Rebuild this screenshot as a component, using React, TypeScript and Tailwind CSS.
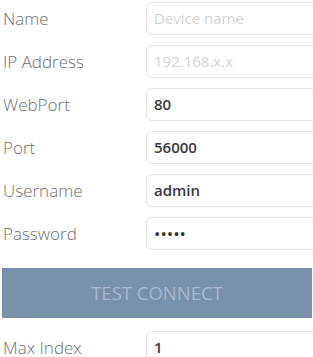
import React from 'react';

const rows = [
  { label: 'Name', value: '', placeholder: 'Device name' },
  { label: 'IP Address', value: '', placeholder: '192.168.x.x' },
  { label: 'WebPort', value: '80' },
  { label: 'Port', value: '56000' },
  { label: 'Username', value: 'admin' },
  { label: 'Password', value: '•••••', password: true },
];

function Field({ label, value, placeholder, password }: { label: string; value: string; placeholder?: string; password?: boolean }) {
  return (
    <div className="flex items-center h-[33px]">
      <span className="w-[146px] shrink-0 pl-[3px] text-[17px] font-light text-[#6e6e6e]">{label}</span>
      <div className="w-[200px] h-[33px] shrink-0 border border-[#e2e2e2] rounded-[6px] flex items-center pl-[7px]">
        {value ? (
          <span className={password ? 'text-[17px] text-[#333]' : 'text-[15px] font-semibold text-[#3a3a3a]'}>{value}</span>
        ) : (
          <span className="text-[15px] text-[#d2d2d2]">{placeholder}</span>
        )}
      </div>
    </div>
  );
}

export default function App() {
  return (
    <div className="w-[313px] h-[357px] bg-white overflow-hidden font-['Open_Sans',sans-serif] pt-[2px]">
      <div className="flex flex-col gap-[10px]">
        {rows.map((r) => (
          <Field key={r.label} {...r} />
        ))}
      </div>

      {/* Test button */}
      <div className="mt-[18px] ml-[2px] w-[310px] h-[50px] bg-[#7990ab] flex items-center justify-center">
        <span className="text-[18.5px] text-[#a7b7ca]">TEST CONNECT</span>
      </div>

      <div className="mt-[13px]">
        <Field label="Max Index" value="1" />
      </div>
    </div>
  );
}
